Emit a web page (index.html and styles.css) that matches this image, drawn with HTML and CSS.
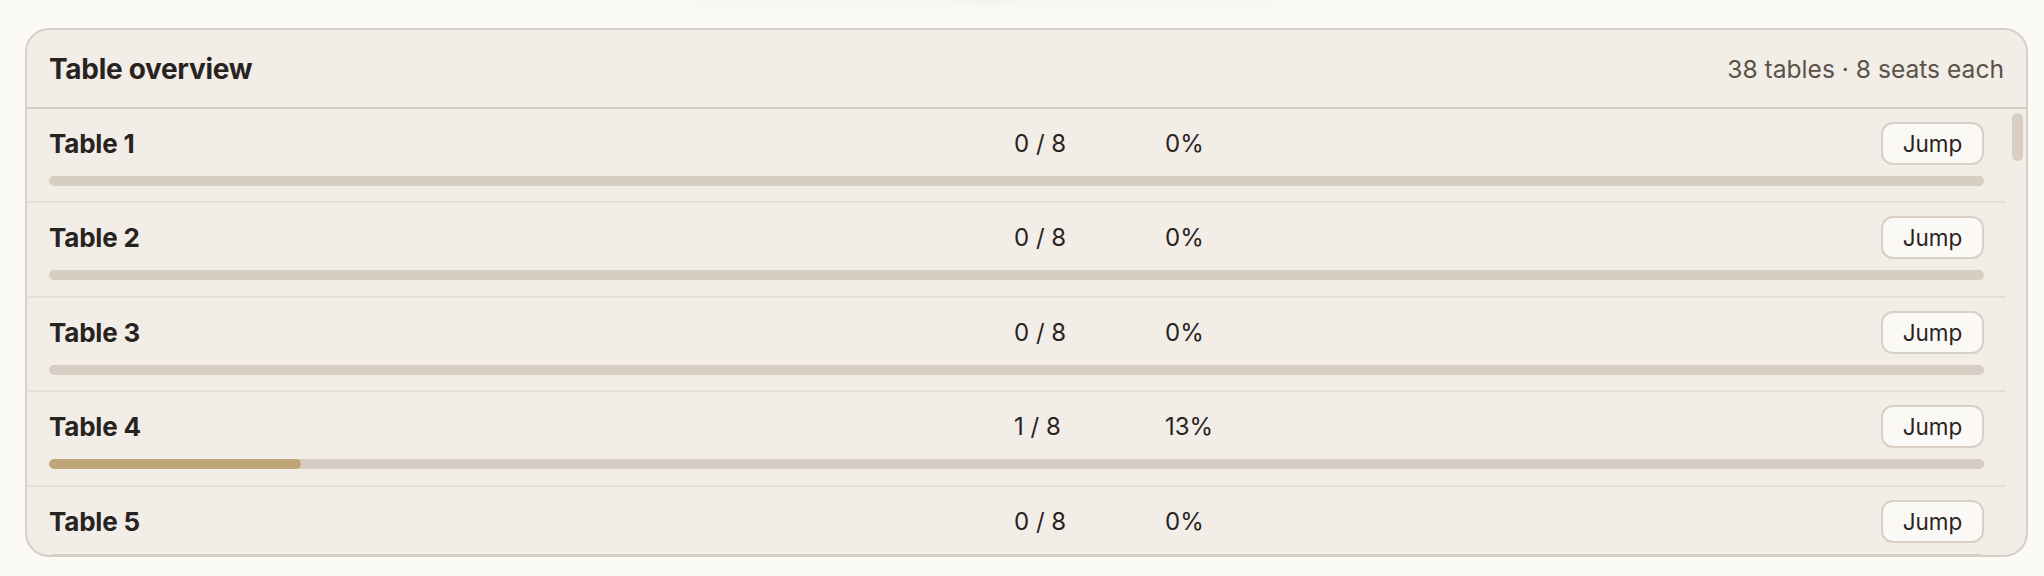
FILE: index.html
```html
<!DOCTYPE html>
<html lang="en">
<head>
  <meta charset="UTF-8" />
  <title>Table overview</title>
  <meta name="viewport" content="width=device-width, initial-scale=1.0" />
  <link rel="stylesheet" href="styles.css">
</head>
<body>
  <div class="top-glow"></div>

  <section class="card">
    <header class="card-head">
      <h2>Table overview</h2>
      <span id="summary" class="summary">38 tables · 8 seats each</span>
    </header>

    <div class="card-body">
      <div id="tables" class="table-list"></div>
      <div class="rail"><div class="thumb"></div></div>
    </div>
  </section>

  <script>
    const SEATS = 8;
    const taken = { 4: 1 }; // seated guests per table

    const list = document.getElementById("tables");
    for (let i = 1; i <= 38; i++) {
      const n = taken[i] || 0;
      const pct = Math.round(n / SEATS * 100);
      const row = document.createElement("div");
      row.className = "table-row";
      row.innerHTML = `
        <div class="row-top">
          <span class="name">Table ${i}</span>
          <span class="count">${n} / ${SEATS}</span>
          <span class="pct">${pct}%</span>
          <button class="jump">Jump</button>
        </div>
        <div class="bar"><div class="fill" style="width: ${pct}%"></div></div>`;
      list.appendChild(row);
    }
  </script>
</body>
</html>
```

FILE: styles.css
```css
body {
  margin: 0;
  padding: 0 16px 0 25px;
  background: #fbfaf7;
  color: #29231f;
  font-family: 'Inter', 'Noto Sans', sans-serif;
}
.top-glow {
  height: 28px;
  margin: 0 530px 0 450px;
  background: radial-gradient(ellipse 50% 55% at 50% 0, rgba(120, 105, 85, 0.045), rgba(120, 105, 85, 0) 100%);
}
.card {
  height: 529px;
  box-sizing: border-box;
  display: flex;
  flex-direction: column;
  background: #f2ede7;
  border: 2px solid #d8cec4;
  border-radius: 24px;
  overflow: hidden;
}
.card-head {
  flex: none;
  height: 77px;
  display: flex;
  align-items: center;
  justify-content: space-between;
  padding: 0 22px;
  border-bottom: 2px solid #d8cec4;
}
.card-head h2 {
  margin: 0;
  font-size: 28px;
  font-weight: 700;
  letter-spacing: -0.3px;
}
.summary {
  font-size: 24.6px;
  color: #5b524a;
}
.card-body {
  flex: 1;
  min-height: 0;
  display: flex;
}
.table-list {
  flex: 1;
  overflow: hidden;
}
.rail {
  flex: none;
  width: 20px;
  padding: 4px 0 0 6px;
  box-sizing: border-box;
}
.thumb {
  width: 11px;
  height: 48px;
  border-radius: 6px;
  background: #d8cec4;
}
.table-row {
  height: 94.4px;
  box-sizing: border-box;
  padding: 13px 22px 0;
  border-bottom: 2px solid #e6dfd7;
  display: flex;
  flex-direction: column;
}
.row-top {
  display: grid;
  grid-template-columns: 1fr 151px 716px auto;
  align-items: center;
  height: 43px;
}
.name {
  font-size: 26px;
  font-weight: 700;
  letter-spacing: -0.2px;
}
.count, .pct {
  font-size: 24px;
}
.jump {
  width: 103px;
  height: 43px;
  padding: 0;
  background: #fbf9f6;
  border: 2px solid #d9cfc5;
  border-radius: 12px;
  color: #29231f;
  font-family: inherit;
  font-size: 22.5px;
}
.bar {
  margin-top: 11px;
  height: 10px;
  border-radius: 5px;
  background: #d7cdc3;
  overflow: hidden;
}
.fill {
  height: 100%;
  border-radius: 5px;
  background: #bfa578;
}
```
